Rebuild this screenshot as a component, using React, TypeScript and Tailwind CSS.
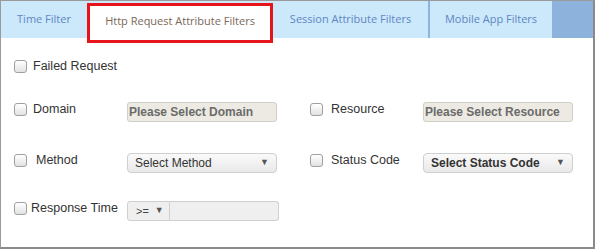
import React from 'react';

function Box() {
  return (
    <span className="inline-block w-[13px] h-[13px] shrink-0 rounded-[3px] border border-[#a0a0a0] bg-gradient-to-b from-white to-[#e2e2e2]" />
  );
}

function Field({ label, gap = 'ml-[6px]', children }: { label: string; gap?: string; children?: React.ReactNode }) {
  return (
    <div className="flex items-start">
      <div className="flex items-center h-[14px] w-[113px] mt-[-1px]">
        <Box />
        <span className={`${gap} text-[12.5px] leading-none text-[#333]`}>{label}</span>
      </div>
      {children && <div className="mt-[-1px]">{children}</div>}
    </div>
  );
}

function Disabled({ text, w = 'w-[150px]' }: { text: string; w?: string }) {
  return (
    <div className={`${w} h-[20px] flex items-center pl-[1px] rounded-[3px] border border-[#cfcfc6] bg-[#eceae2] text-[12px] font-bold text-[#6b6b6b]`}>
      {text}
    </div>
  );
}

function Select({ text, bold }: { text: string; bold?: boolean }) {
  return (
    <div className={`w-[150px] h-[20px] flex items-center justify-between pl-[7px] pr-[7px] rounded-[4px] border border-[#cfcfcf] bg-gradient-to-b from-[#fafafa] to-[#e9e9e9] text-[12px] text-[#333] ${bold ? 'font-bold' : ''}`}>
      <span>{text}</span>
      <span className="text-[9px] text-[#555]">▼</span>
    </div>
  );
}

export default function App() {
  const tabs = [
    { name: 'Time Filter', w: 'w-[86px]' },
    { name: 'Http Request Attribute Filters', w: 'w-[186px]', active: true },
    { name: 'Session Attribute Filters', w: 'w-[155px]' },
    { name: 'Mobile App Filters', w: 'w-[124px]', sep: true },
  ];

  return (
    <div className="w-[595px] h-[249px] bg-white border-t border-l border-[#9a9a9a] border-r-2 border-b-2 border-r-[#8a8a8a] border-b-[#8a8a8a] flex flex-col" style={{ fontFamily: '"Liberation Sans", Arial, sans-serif' }}>
      <div className="flex h-[37px] bg-[#cce8fb] shrink-0" style={{ fontFamily: '"Open Sans", sans-serif' }}>
        {tabs.map((t, i) =>
          t.active ? (
            <div key={i} className={`${t.w} h-[40px] mt-[2px] relative z-10 bg-white border-[3px] border-[#e8141c] flex items-center justify-center text-[11px] text-[#7a6858]`}>
              <span className="mb-[4px]">{t.name}</span>
            </div>
          ) : (
            <div key={i} className={`${t.w} h-full flex items-center justify-center text-[11px] text-[#5f87c3] ${t.sep ? 'border-l-2 border-[#8fb4dc]' : ''}`}>
              {t.name}
            </div>
          )
        )}
        <div className="flex-1 bg-[#8db3dd]" />
      </div>

      <div className="flex flex-col pl-[13px] pt-[22px]">
        <Field label="Failed Request" />

        <div className="flex mt-[30px]">
          <div className="w-[296px]">
            <Field label="Domain">
              <Disabled text="Please Select Domain" />
            </Field>
          </div>
          <Field label="Resource" gap="ml-[8px]">
            <Disabled text="Please Select Resource" />
          </Field>
        </div>

        <div className="flex mt-[32px]">
          <div className="w-[296px]">
            <Field label="Method" gap="ml-[9px]">
              <Select text="Select Method" />
            </Field>
          </div>
          <Field label="Status Code" gap="ml-[8px]">
            <Select text="Select Status Code" bold />
          </Field>
        </div>

        <div className="mt-[29px]">
          <Field label="Response Time" gap="ml-[4px]">
            <div className="flex">
              <div className="w-[43px] h-[20px] flex items-center pl-[8px] gap-[6px] rounded-l-[3px] border border-[#cfcfcf] bg-[#efefef] text-[11px] text-[#444]">
                <span>&gt;=</span>
                <span className="text-[9px] text-[#555]">▼</span>
              </div>
              <div className="w-[109px] h-[20px] rounded-r-[3px] border border-l-0 border-[#cfcfcf] bg-[#efefef]" />
            </div>
          </Field>
        </div>
      </div>
    </div>
  );
}
